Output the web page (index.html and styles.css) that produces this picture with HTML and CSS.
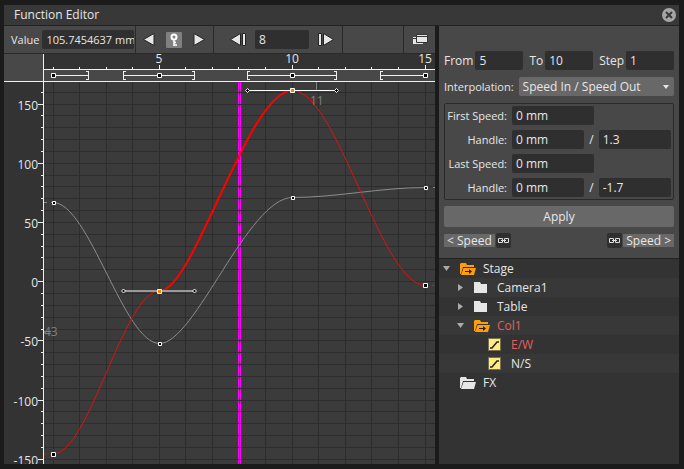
FILE: index.html
```html
<!DOCTYPE html>
<html lang="en">
<head>
<meta charset="utf-8">
<title>Function Editor</title>
<link rel="stylesheet" href="styles.css">
</head>
<body>
<div class="window">
  <header class="titlebar">
    <h1>Function Editor</h1>
    <button class="close" type="button" aria-label="Close">
      <svg width="14" height="14" viewBox="0 0 14 14"><circle cx="7" cy="7" r="7" fill="#a6a6a6"/><path d="M4 4l6 6M10 4l-6 6" stroke="#383838" stroke-width="2"/></svg>
    </button>
  </header>
  <div class="body">
    <main class="editor">
      <div class="toolbar">
        <div class="group value">
          <label for="value">Value</label>
          <input id="value" type="text" value="105.7454637 mm">
        </div>
        <div class="group keys">
          <button type="button" aria-label="Previous key"><svg width="12" height="13" viewBox="0 0 12 13"><path d="M11 .5v12L.5 6.500z" fill="#e6e6e6" stroke="#222"/></svg></button>
          <button class="key" type="button" aria-label="Set key"><svg width="16" height="16" viewBox="0 0 16 16"><circle cx="8" cy="5" r="2.500" fill="#808080" stroke="#fff" stroke-width="2"/><path d="M8 8v6M8 13h3M8 10.500h2" stroke="#fff" stroke-width="1.500"/></svg></button>
          <button type="button" aria-label="Next key"><svg width="12" height="13" viewBox="0 0 12 13"><path d="M1 .5v12L11.500 6.500z" fill="#e6e6e6" stroke="#222"/></svg></button>
        </div>
        <div class="group frames">
          <button type="button" aria-label="Previous frame"><svg width="16" height="13" viewBox="0 0 16 13"><path d="M10.500 .5v12L.5 6.500zM12.500 .5h3v12h-3z" fill="#e6e6e6" stroke="#222"/></svg></button>
          <input type="text" value="8" aria-label="Current frame">
          <button type="button" aria-label="Next frame"><svg width="16" height="13" viewBox="0 0 16 13"><path d="M5.500 .5v12l10-6zM.5 .5h3v12h-3z" fill="#e6e6e6" stroke="#222"/></svg></button>
        </div>
        <div class="group panels">
          <button type="button" aria-label="Toggle panel"><svg width="15" height="11" viewBox="0 0 15 11"><path d="M0 3h10v7H0z" fill="#e6e6e6"/><path d="M0 4.500h4" stroke="#333"/><path d="M3.500 .5h11v8h-11z" fill="#e6e6e6" stroke="#333"/><path d="M4 2.500h10" stroke="#333"/></svg></button>
        </div>
      </div>
      <svg class="chart" viewBox="4 54 431 410" preserveAspectRatio="xMinYMin slice" role="img" aria-label="Function curves">
        <path d="M4 54h431v410H4z" fill="#333"/>
        <path d="M44 82h391v382H44z" fill="#3b3b3b"/>
        <path d="M4 54h39v27H4zM44 70h391v11H44z" fill="#484848"/>
        <g fill="none" shape-rendering="crispEdges">
          <path class="grid" d="M53.500 82v382M79.500 82v382M106.500 82v382M132.500 82v382M159.500 82v382M185.500 82v382M212.500 82v382M265.500 82v382M292.500 82v382M318.500 82v382M345.500 82v382M371.500 82v382M398.500 82v382M425.500 82v382"/>
          <path d="M238.500 82v382M240.500 82v382" stroke="#f0f"/>
          <path class="grid" d="M44 92.500h391M44 104.500h391M44 115.500h391M44 127.500h391M44 139.500h391M44 151.500h391M44 163.500h391M44 175.500h391M44 186.500h391M44 198.500h391M44 210.500h391M44 222.500h391M44 234.500h391M44 246.500h391M44 257.500h391M44 269.500h391M44 281.500h391M44 293.500h391M44 305.500h391M44 317.500h391M44 329.500h391M44 340.500h391M44 352.500h391M44 364.500h391M44 376.500h391M44 388.500h391M44 400.500h391M44 411.500h391M44 423.500h391M44 435.500h391M44 447.500h391M44 459.500h391"/>
          <path class="axis" d="M43.500 54v410M44 69.500h391M4 81.500h431"/>
          <path class="axis" d="M53.500 67v2M79.500 67v2M106.500 67v2M132.500 67v2M159.500 65v4M185.500 67v2M212.500 67v2M238.500 67v2M265.500 67v2M292.500 65v4M318.500 67v2M345.500 67v2M371.500 67v2M398.500 67v2M425.500 65v4"/>
          <path class="axis" d="M41 92.500h2M38 104.500h5M41 115.500h2M41 127.500h2M41 139.500h2M41 151.500h2M38 163.500h5M41 175.500h2M41 186.500h2M41 198.500h2M41 210.500h2M38 222.500h5M41 234.500h2M41 246.500h2M41 257.500h2M41 269.500h2M38 281.500h5M41 293.500h2M41 305.500h2M41 317.500h2M41 329.500h2M38 340.500h5M41 352.500h2M41 364.500h2M41 376.500h2M41 388.500h2M38 400.500h5M41 411.500h2M41 423.500h2M41 435.500h2M41 447.500h2M38 459.500h5"/>
          <path class="axis" d="M53 75.500h35M124 75.500h70M248 75.500h88M381 75.500h44M86 71.500h2.500v8H86M126 71.500h-2.500v8h2.500M192 71.500h2.500v8H192M250 71.500h-2.500v8h2.500M334 71.500h2.500v8H334M383 71.500h-2.500v8h2.500"/>
        </g>
        <path class="other" d="M44 202.500h3M51 202.500h2C89 202.500 124 343.500 159.500 343.500C195 343.500 248 197.500 292.500 197.500C336 197.500 381 187.500 425.500 187.500M433 187.500h2"/>
        <path class="curve" d="M44 454h2M50 454h3C89 454 124 291 159.500 291M292.500 90.500C337 90.500 381 285.500 425.500 285.500M432 285.500h3"/>
        <path class="segment" d="M159.500 291C194 291 248 90.500 292.500 90.500"/>
        <path d="M316.500 82v9" stroke="#808080"/>
        <path d="M123 291h72" stroke="#999" stroke-width="2"/>
        <path d="M247 90.500h89" stroke="#fff"/>
        <g class="knot">
          <path d="M51.500 73.500h4v4h-4zM157.500 73.500h4v4h-4zM290.500 73.500h4v4h-4zM423.500 73.500h4v4h-4z"/>
          <path d="M51.500 452.500h4v4h-4zM423.500 283.500h4v4h-4z"/>
          <path d="M52.500 201.500h3v3h-3zM158.500 342.500h3v3h-3zM291.500 196.500h3v3h-3zM424.500 186.500h3v3h-3z"/>
          <path d="M157.500 289.500h4v4h-4zM290.500 88.500h4v4h-4z" class="active"/>
          <path d="M123.500 289l2 2-2 2-2-2zM194.500 289l2 2-2 2-2-2zM247.500 88.500l2 2-2 2-2-2zM336.500 88.500l2 2-2 2-2-2z"/>
        </g>
        <g class="labels" text-anchor="middle">
          <text x="159" y="63">5</text>
          <text x="292" y="63">10</text>
          <text x="425" y="63">15</text>
        </g>
        <g class="labels" text-anchor="end">
          <text x="38" y="110">150</text>
          <text x="38" y="169">100</text>
          <text x="38" y="228">50</text>
          <text x="38" y="287">0</text>
          <text x="38" y="346">-50</text>
          <text x="38" y="406">-100</text>
          <text x="38" y="465">-150</text>
        </g>
        <g class="labels faint">
          <text x="310" y="105">11</text>
          <text x="44" y="336">43</text>
          <path d="M44 331.500h7" stroke="#808080"/>
        </g>
      </svg>
    </main>
    <aside class="side">
      <form class="settings">
        <div class="range">
          <label for="from">From</label><input id="from" type="text" value="5">
          <label for="to">To</label><input id="to" type="text" value="10">
          <label for="step">Step</label><input id="step" type="text" value="1">
        </div>
        <div class="interpolation">
          <label for="interp">Interpolation:</label>
          <span class="select"><select id="interp"><option>Speed In / Speed Out</option></select></span>
        </div>
        <fieldset class="speeds">
          <label for="first">First Speed:</label><input id="first" class="wide" type="text" value="0 mm">
          <label for="fh">Handle:</label><span class="pair"><input id="fh" type="text" value="0 mm"><span>/</span><input type="text" value="1.3" aria-label="First handle frames"></span>
          <label for="last">Last Speed:</label><input id="last" class="wide" type="text" value="0 mm">
          <label for="lh">Handle:</label><span class="pair"><input id="lh" type="text" value="0 mm"><span>/</span><input type="text" value="-1.7" aria-label="Last handle frames"></span>
        </fieldset>
        <button class="apply" type="button">Apply</button>
        <div class="links">
          <button class="speed" type="button">&lt; Speed</button>
          <button class="link" type="button" aria-label="Link previous"><svg width="11" height="5" viewBox="0 0 11 5"><path d="M.5 .5h4v4h-4zM6.500 .5h4v4h-4zM3 2.500h5" fill="none" stroke="#ddd"/></svg></button>
          <span class="spacer"></span>
          <button class="link" type="button" aria-label="Link next"><svg width="11" height="5" viewBox="0 0 11 5"><path d="M.5 .5h4v4h-4zM6.500 .5h4v4h-4zM3 2.500h5" fill="none" stroke="#ddd"/></svg></button>
          <button class="speed" type="button">Speed &gt;</button>
        </div>
      </form>
      <svg width="0" height="0" class="defs" aria-hidden="true">
        <symbol id="closed" viewBox="0 0 16 12"><path d="M0 0h6l1 2h6v9H0z" fill="#e6e6e6"/></symbol>
        <symbol id="linked" viewBox="0 0 16 12"><path d="M0 11V1l1-1h5l1 2h7v2H3L1 11z" fill="#ff9d0a"/><path d="M3.500 5H16l-2 7H1z" fill="#ff9d0a"/><path d="M5 8.500h6" stroke="#222"/><path d="M9 6l3 2.500L9 11z" fill="#222"/></symbol>
        <symbol id="open" viewBox="0 0 16 12"><path d="M0 11V1l1-1h5l1 2h7v2H3L1 11z" fill="#e6e6e6"/><path d="M3.500 5H16l-2 7H1z" fill="#e6e6e6"/></symbol>
        <symbol id="fcurve" viewBox="0 0 13 13"><path d="M.5 .5h12v12H.5z" fill="#ffeb80" stroke="#77714d"/><path d="M2 10h2l5-6h2" fill="none" stroke="#222" stroke-width="1.500"/></symbol>
        <symbol id="down" viewBox="0 0 7 5"><path d="M0 0h7L3.500 5z" fill="#aaa"/></symbol>
        <symbol id="right" viewBox="0 0 5 7"><path d="M0 0l5 3.500L0 7z" fill="#aaa"/></symbol>
      </svg>
      <ul class="tree">
        <li><svg class="arrow" width="7" height="5"><use href="#down"/></svg><svg width="16" height="12"><use href="#linked"/></svg><span>Stage</span></li>
        <li class="level1"><svg class="arrow" width="5" height="7"><use href="#right"/></svg><svg width="16" height="12"><use href="#closed"/></svg><span>Camera1</span></li>
        <li class="level1"><svg class="arrow" width="5" height="7"><use href="#right"/></svg><svg width="16" height="12"><use href="#closed"/></svg><span>Table</span></li>
        <li class="level1 current"><svg class="arrow" width="7" height="5"><use href="#down"/></svg><svg width="16" height="12"><use href="#linked"/></svg><span>Col1</span></li>
        <li class="level2 current"><span class="arrow"></span><svg width="13" height="13"><use href="#fcurve"/></svg><span>E/W</span></li>
        <li class="level2"><span class="arrow"></span><svg width="13" height="13"><use href="#fcurve"/></svg><span>N/S</span></li>
        <li><span class="arrow"></span><svg width="16" height="12"><use href="#open"/></svg><span>FX</span></li>
      </ul>
    </aside>
  </div>
</div>
</body>
</html>
```
FILE: styles.css
```css
* { box-sizing: border-box; }
body {
  margin: 0;
  background: #1b1b1b;
  color: #e6e6e6;
  font: 12px/16px "Open Sans", "Noto Sans", sans-serif;
}
button, input, select { font: inherit; color: inherit; border: 0; padding: 0; margin: 0; }
button { background: none; display: flex; align-items: center; justify-content: center; }
input {
  background: #2f2f2f;
  border-radius: 2px;
  width: 100%;
  height: 19px;
  min-width: 0;
  padding: 0 4px;
}
label { white-space: nowrap; }
.window { display: flex; flex-direction: column; height: 100vh; padding: 5px 5px 5px 4px; }
.titlebar {
  display: flex;
  align-items: center;
  justify-content: space-between;
  height: 21px;
  padding: 0 3px 0 10px;
  background: #383838;
  border-bottom: 1px solid #222;
}
h1 { margin: 0; font-size: 12px; font-weight: 400; }
.body { display: grid; grid-template-columns: 1fr 240px; gap: 4px; flex: 1; min-height: 0; }
.editor, .side { display: flex; flex-direction: column; min-width: 0; min-height: 0; }

.toolbar { display: flex; height: 28px; background: #484848; border-bottom: 1px solid #2a2a2a; }
.group { display: flex; align-items: center; border-right: 1px solid #2a2a2a; }
.value { gap: 3px; padding: 0 1px 0 7px; width: 132px; font-size: 11px; }
.value input { flex: 1; padding-right: 0; }
.keys { width: 78px; justify-content: space-between; padding: 0 8px 0 7px; }
.key { background: #808080; border-radius: 1px; }
.frames { width: 129px; gap: 9px; padding-left: 16px; }
.frames input { width: 54px; }
.panels { flex: 1; justify-content: flex-end; border-right: 0; }
.panels button { align-self: stretch; width: 32px; padding-left: 2px; border-left: 1px solid #2a2a2a; }
.chart { display: block; width: 100%; flex: 1; min-height: 0; }
.grid { stroke: #2d2d2d; }
.axis { stroke: #f0f0f0; }
.other { fill: none; stroke: #8c8c8c; }
.curve { fill: none; stroke: #e01010; }
.segment { fill: none; stroke: #f00; stroke-width: 2; }
.knot { fill: #000; stroke: #fff; }
.active { fill: #ff8000; }
.labels { fill: #e6e6e6; font-size: 12px; }
.faint { fill: #808080; }

.settings { background: #484848; border-bottom: 1px solid #222; padding: 25px 5px 10px; }
.range { display: flex; align-items: center; gap: 2px; }
.range input { flex: 1; }
.range input + label { margin-left: 4px; }
.interpolation { display: flex; align-items: center; gap: 5px; margin-top: 7px; }
.interpolation label, .speeds label { font-size: 11px; }
.select { position: relative; flex: 1; display: flex; }
.select::after {
  content: "";
  position: absolute;
  right: 5px;
  top: 8px;
  border: 3px solid transparent;
  border-top: 4px solid #e6e6e6;
  border-bottom: 0;
}
select { appearance: none; flex: 1; height: 19px; padding: 0 4px; background: #686868; border-radius: 2px; }
.speeds {
  display: grid;
  grid-template-columns: 60px minmax(0, 1fr);
  gap: 5px;
  align-items: center;
  margin: 7px 0 0;
  padding: 2px;
  min-width: 0;
  border: 1px solid #2a2a2a;
  border-radius: 2px;
}
.speeds label { text-align: right; }
.speeds .wide { width: 82px; }
.pair { display: flex; align-items: center; gap: 5px; }
.pair input { flex: 1; }
.apply { width: 100%; height: 21px; margin-top: 6px; background: #686868; border-radius: 2px; }
.links { display: flex; align-items: center; gap: 1px; margin-top: 6px; }
.speed { height: 13px; padding: 0 3px; background: #686868; border-radius: 1px; }
.link { width: 15px; height: 15px; background: #2f2f2f; border-radius: 2px; }
.spacer { flex: 1; }

.defs { position: absolute; }
.tree {
  flex: 1;
  margin: 0;
  padding: 0;
  list-style: none;
  background: #333;
}
.tree li { display: flex; align-items: center; height: 19px; padding-left: 4px; }
.tree li:nth-child(even) { background: #383838; }
.tree .arrow { width: 7px; margin-right: 10px; }
.tree span:last-child { margin-left: 7px; }
.tree .level1 { padding-left: 18px; }
.tree .level2 { padding-left: 32px; }
.tree .level2 span:last-child { margin-left: 10px; }
.current { color: #e06060; }
```
